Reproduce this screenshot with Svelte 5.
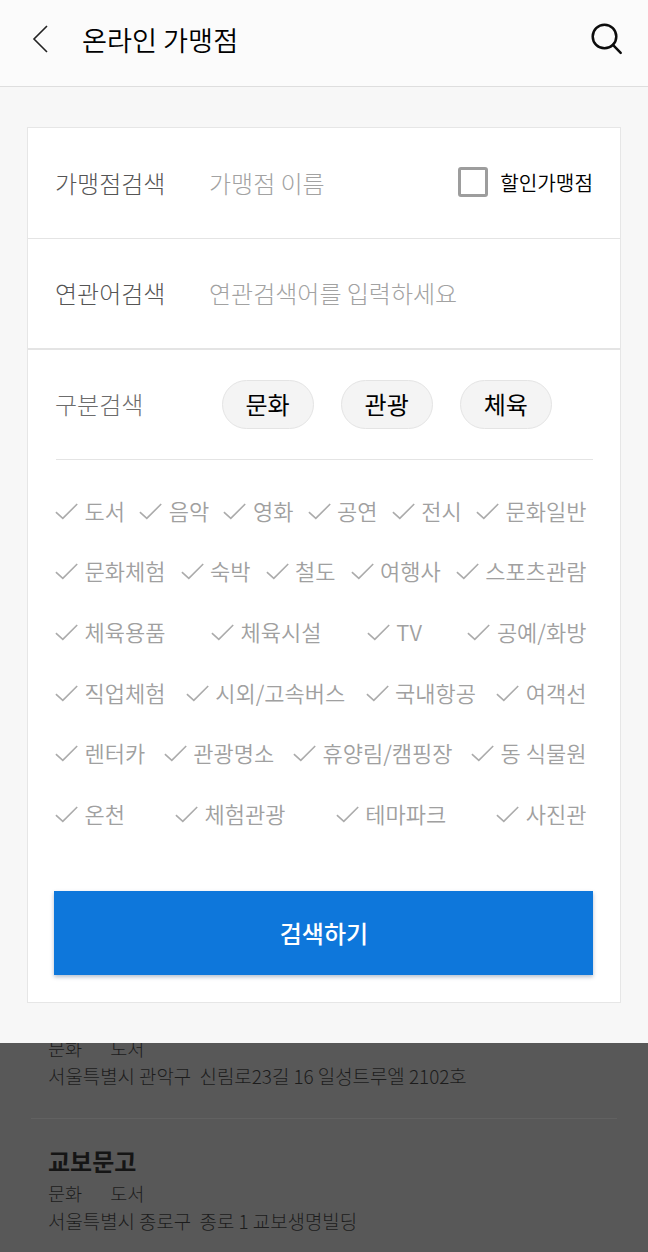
<script>
  let storeName = $state("");
  let keyword = $state("");
  let discountOnly = $state(false);
  let selected = $state([]);

  const groups = ["문화", "관광", "체육"];

  // Each inner array is one line of the category list
  const categories = [
    ["도서", "음악", "영화", "공연", "전시", "문화일반"],
    ["문화체험", "숙박", "철도", "여행사", "스포츠관람"],
    ["체육용품", "체육시설", "TV", "공예/화방"],
    ["직업체험", "시외/고속버스", "국내항공", "여객선"],
    ["렌터카", "관광명소", "휴양림/캠핑장", "동 식물원"],
    ["온천", "체험관광", "테마파크", "사진관"],
  ];

  const stores = [
    {
      name: "",
      group: "문화",
      category: "도서",
      address: "서울특별시 관악구  신림로23길 16 일성트루엘 2102호",
    },
    {
      name: "교보문고",
      group: "문화",
      category: "도서",
      address: "서울특별시 종로구  종로 1 교보생명빌딩",
    },
  ];

  function toggle(name) {
    selected = selected.includes(name)
      ? selected.filter((s) => s !== name)
      : [...selected, name];
  }
</script>

<div class="app">
  <header>
    <button class="back" aria-label="뒤로">
      <svg width="18" height="30" viewBox="0 0 18 30">
        <path d="M16 2 L3 15 L16 28" />
      </svg>
    </button>
    <h1>온라인 가맹점</h1>
    <button class="search" aria-label="검색">
      <svg width="34" height="34" viewBox="0 0 34 34">
        <circle cx="14.5" cy="14.5" r="11.8" />
        <path d="M22.9 22.9 L30.7 30.9" />
      </svg>
    </button>
  </header>

  <section class="panel">
    <div class="card">
      <div class="row">
        <label class="label" for="store">가맹점검색</label>
        <input id="store" placeholder="가맹점 이름" bind:value={storeName} />
        <label class="discount">
          <input type="checkbox" bind:checked={discountOnly} />
          <span>할인가맹점</span>
        </label>
      </div>
      <div class="row second">
        <label class="label" for="keyword">연관어검색</label>
        <input id="keyword" placeholder="연관검색어를 입력하세요" bind:value={keyword} />
      </div>
      <div class="row groups">
        <span class="label">구분검색</span>
        <div class="chips">
          {#each groups as group}
            <button class="chip">{group}</button>
          {/each}
        </div>
      </div>

      <div class="categories">
        {#each categories as line}
          <div class="line">
            {#each line as name}
              <button class="category" class:on={selected.includes(name)} onclick={() => toggle(name)}>
                <svg width="23" height="17" viewBox="0 0 23 17">
                  <path d="M0.9 9.2 L7.8 15.4 L22.2 1" />
                </svg>
                <span>{name}</span>
              </button>
            {/each}
          </div>
        {/each}
      </div>

      <button class="submit">검색하기</button>
    </div>
  </section>

  <section class="results">
    {#each stores as store}
      <article>
        {#if store.name}<h2>{store.name}</h2>{/if}
        <p class="kind"><span>{store.group}</span><span>{store.category}</span></p>
        <p class="address">{store.address}</p>
      </article>
    {/each}
  </section>
</div>

<style>
  :global(body) {
    margin: 0;
    background: #585858;
  }
  .app {
    width: 648px;
    height: 1252px;
    overflow: hidden;
    display: flex;
    flex-direction: column;
    font-family: "Noto Sans CJK KR", "Noto Sans", sans-serif;
    font-weight: 300;
    color: #000;
  }
  .app * {
    box-sizing: border-box;
  }
  button,
  input {
    font: inherit;
    color: inherit;
    border: 0;
    padding: 0;
    margin: 0;
    background: none;
  }
  svg {
    display: block;
    fill: none;
    stroke: #222;
    stroke-width: 1.6;
  }

  header {
    flex: none;
    height: 87px;
    padding: 0 24.5px 8px 31px;
    display: flex;
    align-items: center;
    background: #fbfbfb;
    border-bottom: 1px solid #dedede;
  }
  h1 {
    flex: 1;
    margin: 0 0 0 33px;
    font-size: 27.2px;
    line-height: 40px;
    font-weight: 350;
  }
  .search svg {
    stroke: #0c0c0c;
    stroke-width: 2.5;
    stroke-linecap: round;
  }

  .panel {
    flex: none;
    height: 956px;
    padding: 40px 27px 0;
    background: #f7f7f7;
  }
  .card {
    height: 876px;
    background: #fff;
    border: 1px solid #e6e6e6;
  }
  .row {
    height: 111px;
    padding: 0 27px 2px;
    display: flex;
    align-items: center;
    border-bottom: 1px solid #e4e4e4;
  }
  .row.second {
    border-bottom-width: 2px;
  }
  .row.groups {
    height: 110px;
    margin: 0 27px 0 28px;
    padding: 0;
  }
  .label {
    width: 154px;
    font-size: 24px;
    color: #555;
  }
  .groups .label {
    width: 166.5px;
    margin-left: -1px;
    padding-bottom: 2px;
    color: #6c6c6c;
  }
  .row input:not([type]) {
    flex: 1;
    min-width: 0;
    height: 40px;
    font-size: 24px;
    outline: none;
  }
  input::placeholder {
    color: #a2a2a2;
    opacity: 1;
  }
  .discount {
    display: flex;
    align-items: center;
    gap: 12px;
    font-size: 20.2px;
    font-weight: 350;
  }
  .discount input {
    appearance: none;
    width: 30.5px;
    height: 30.5px;
    border: 3px solid #9d9d9d;
    border-radius: 3px;
  }
  .discount input:checked {
    background: #0e77db;
  }
  .chips {
    display: flex;
    gap: 27.2px;
  }
  .chip {
    width: 92px;
    height: 49px;
    border: 1px solid #e4e4e4;
    border-radius: 25px;
    background: #f4f4f4;
    font-size: 24px;
    font-weight: 400;
    line-height: 44px;
    padding-bottom: 2px;
  }

  .categories {
    padding: 21px 33.5px 0 27px;
  }
  .line {
    height: 60.6px;
    display: flex;
    align-items: center;
    justify-content: space-between;
  }
  .category {
    display: flex;
    align-items: center;
    gap: 6.5px;
    font-size: 22px;
    line-height: 32px;
    font-weight: 350;
    color: #a0a0a0;
    white-space: nowrap;
  }
  .category span {
    padding-bottom: 3px;
  }
  .category svg {
    stroke: #ababab;
    stroke-width: 1.6;
  }
  .category.on {
    color: #0e77db;
  }

  .submit {
    display: block;
    width: 539px;
    height: 84px;
    margin: 46px 0 0 26.4px;
    padding-bottom: 1px;
    background: #0e77db;
    color: #fff;
    font-size: 24px;
    font-weight: 500;
    box-shadow: 0 2px 4px rgba(0, 40, 90, 0.3);
  }

  /* dimmed list behind the search panel */
  .results {
    flex: 1;
    min-height: 0;
    overflow: hidden;
    padding: 0 31px;
    background: #585858;
    color: #1c1c1c;
    font-size: 18.9px;
  }
  article {
    padding: 24px 17px 0;
    border-top: 1px solid #616161;
  }
  article:first-child {
    height: 84px;
    padding-top: 0;
    border-top: 0;
  }
  /* the first store is scrolled partly under the panel */
  article:first-child .kind {
    margin-top: -9px;
  }
  h2 {
    margin: 0;
    font-size: 24px;
    font-weight: 700;
    line-height: 36px;
    color: #151515;
  }
  p {
    margin: 0;
    line-height: 28px;
    white-space: pre;
  }
  .kind {
    display: flex;
    gap: 28px;
    font-size: 18.6px;
  }
</style>
